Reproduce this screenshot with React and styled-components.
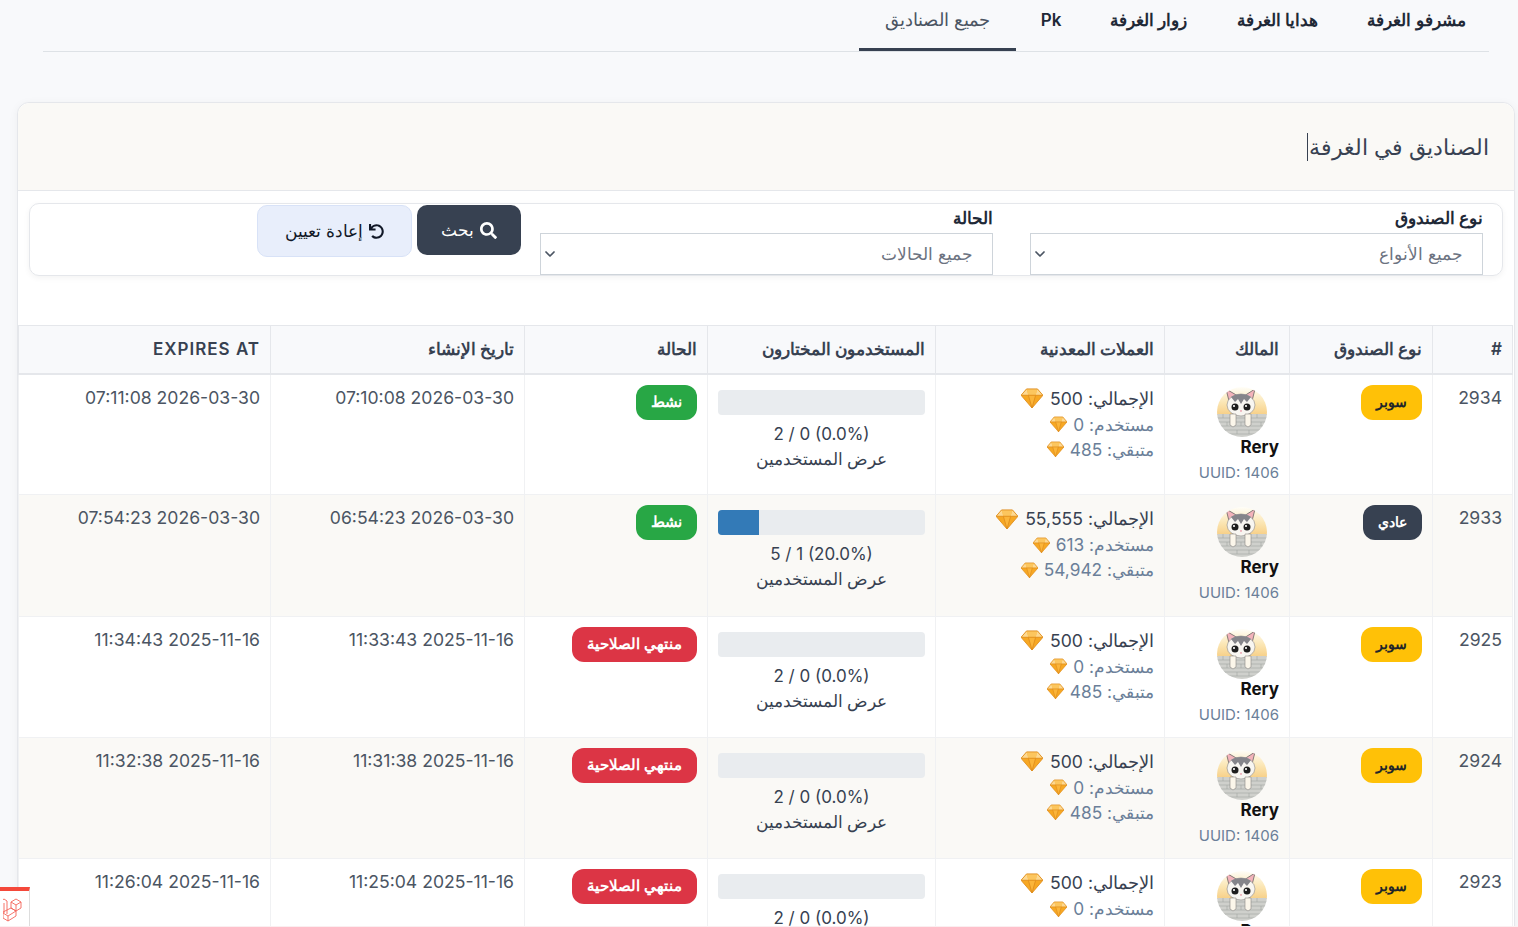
import React from "react";
import styled, { createGlobalStyle } from "styled-components";
import { FaSearch, FaUndo } from "react-icons/fa";
import { ChevronDown } from "lucide-react";

const GlobalStyle = createGlobalStyle`
  html, body {
    margin: 0;
    height: 927px;
    overflow: hidden;
    background: #f8f9fb;
    font-family: Inter, "Noto Sans", sans-serif;
    color: #374151;
  }
  * { box-sizing: border-box; }
`;

const Page = styled.div`
  direction: rtl;
  padding: 0 3px;
`;

const Tabs = styled.nav`
  display: flex;
  margin: 0 26px 50px 40px;
  height: 52px;
  border-bottom: 1px solid #dee2e6;
`;

const Tab = styled.a`
  width: ${(p) => p.$w}px;
  height: 51px;
  padding-top: 10px;
  text-align: center;
  font-size: ${(p) => (p.$active ? "18px" : "17px")};
  line-height: 20px;
  color: ${(p) => (p.$active ? "#4b5563" : "#1f2937")};
  font-weight: ${(p) => (p.$active ? 500 : 600)};
  border-bottom: ${(p) => (p.$active ? "3px solid #374151" : "none")};
`;

const Card = styled.section`
  background: #fff;
  margin-inline: 0 14px;
  border: 1px solid #e5e7eb;
  border-radius: 12px 12px 0 0;
  box-shadow: 0 2px 10px rgba(0, 0, 0, 0.05);
`;

const CardHeader = styled.header`
  height: 88px;
  padding: 0 25px;
  display: flex;
  align-items: center;
  background: #faf9f6;
  border-bottom: 1px solid #e5e7eb;
  border-radius: 12px 12px 0 0;
`;

const Title = styled.h2`
  margin: 0;
  padding-inline-end: 1px;
  font-size: 22px;
  line-height: 28px;
  font-weight: 500;
  color: #374151;
  border-left: 1px solid #374151;
`;

const Filters = styled.form`
  display: flex;
  align-items: flex-start;
  height: 73px;
  margin: 12px 11px 49px 11px;
  padding: 1px 19px 0 0;
  border: 1px solid #e5e7eb;
  border-radius: 10px;
  box-shadow: 0 2px 6px rgba(0, 0, 0, 0.05);
`;

const Fields = styled.div`
  display: flex;
  gap: 37px;
  margin-inline-end: 19px;
`;

const Field = styled.div`
  width: 453px;
`;

const Label = styled.label`
  display: block;
  height: 28px;
  font-size: 17px;
  line-height: 26px;
  font-weight: 600;
  color: #1f2937;
`;

const SelectBox = styled.div`
  position: relative;
  height: 42px;
`;

const Select = styled.select`
  display: block;
  width: 100%;
  height: 100%;
  padding: 0 19px;
  appearance: none;
  font: inherit;
  font-size: 17px;
  color: #6b7280;
  background: #fff;
  border: 1px solid #ced4da;
  border-radius: 0;
`;

const Chevron = styled(ChevronDown)`
  position: absolute;
  left: 2px;
  top: 13px;
  width: 16px;
  height: 16px;
  color: #4b5563;
  stroke-width: 2.6;
  pointer-events: none;
`;

const Button = styled.button`
  display: flex;
  align-items: center;
  justify-content: center;
  gap: 6px;
  flex: none;
  height: ${(p) => (p.$reset ? "52px" : "50px")};
  margin-inline-end: 5px;
  width: ${(p) => (p.$reset ? "155px" : "104px")};
  font: inherit;
  font-size: 17px;
  font-weight: 500;
  color: ${(p) => (p.$reset ? "#111827" : "#fff")};
  background: ${(p) => (p.$reset ? "#e8eefb" : "#374151")};
  border: ${(p) => (p.$reset ? "1px solid #d8e2f7" : "none")};
  border-radius: 10px;
`;

const Table = styled.table`
  width: 1494px;
  margin-inline-start: 1px;
  table-layout: fixed;
  border-collapse: collapse;
  font-size: 17.6px;
`;

const Th = styled.th`
  width: ${(p) => p.$w}px;
  height: 48px;
  padding: 0 10px;
  text-align: right;
  font-size: 17px;
  font-weight: 600;
  letter-spacing: ${(p) => (p.$latin ? "1px" : "0")};
  color: #374151;
  background: #f8f9fb;
  border: 1px solid #e5e7eb;
  border-bottom-width: 2px;
`;

const Row = styled.tr`
  height: 121.25px;
  background: ${(p) => (p.$odd ? "#faf9f6" : "#fff")};
`;

const Td = styled.td`
  padding: 10px 10px 0;
  vertical-align: top;
  text-align: right;
  line-height: 25px;
  color: #4b5563;
  border: 1px solid #f0f1f3;
`;

const Badge = styled.span`
  display: inline-block;
  height: 35px;
  padding: 0 15px;
  font-size: ${(p) => (p.$kind === "super" || p.$kind === "normal" ? "14.2px" : "14.8px")};
  line-height: 34px;
  font-weight: ${(p) => (p.$kind === "super" || p.$kind === "normal" ? 700 : 600)};
  border-radius: 12px;
  color: ${(p) => (p.$kind === "super" ? "#212529" : "#fff")};
  background: ${(p) =>
    ({ super: "#ffc107", normal: "#374151", active: "#28a745", expired: "#dc3545" })[p.$kind]};
`;

const Owner = styled.div`
  display: inline-flex;
  flex-direction: column;
`;

const Avatar = styled.svg`
  width: 50px;
  height: 50px;
  align-self: center;
  margin: 2px 0 0 6px;
`;

const OwnerName = styled.div`
  margin-top: -2px;
  height: 26px;
  font-size: 17px;
  line-height: 24px;
  font-weight: 700;
  color: #111;
`;

const Uuid = styled.div`
  font-size: 15px;
  line-height: 24px;
  color: #6b7f99;
`;

const Coin = styled.div`
  display: flex;
  align-items: center;
  gap: ${(p) => (p.$total ? "7px" : "6px")};
  height: ${(p) => (p.$total ? "27px" : "25px")};
  font-size: ${(p) => (p.$total ? "17.6px" : "17.3px")};
  color: ${(p) => (p.$total ? "#374151" : "#6b7f99")};
`;

const Gem = styled.svg`
  flex: none;
  width: ${(p) => (p.$total ? "22px" : "17px")};
  height: ${(p) => (p.$total ? "20px" : "16px")};
`;

const Track = styled.div`
  height: 25px;
  margin-top: 5px;
  background: #e9ecef;
  border-radius: 4px;
  overflow: hidden;
  direction: ltr;
`;

const Fill = styled.div`
  height: 100%;
  background: #337ab7;
`;

const Usage = styled.div`
  margin-top: 6px;
  text-align: center;
  font-size: 17px;
  line-height: 26px;
  color: #374151;
`;

const UsersLink = styled.div`
  text-align: center;
  font-size: 17px;
  line-height: 25px;
  color: #374151;
`;

const Debugbar = styled.div`
  position: fixed;
  left: 0;
  bottom: 0;
  width: 30px;
  height: 40px;
  background: #fff;
  border-top: 4px solid #f4483a;
  border-right: 1px solid #ddd;
  overflow: hidden;
`;

const BottomLine = styled.div`
  position: fixed;
  left: 0;
  right: 0;
  bottom: 0;
  height: 1px;
  background: #fbeef0;
`;

const tabs = [
  ["مشرفو الغرفة", 145],
  ["هدايا الغرفة", 133],
  ["زوار الغرفة", 125],
  ["Pk", 70],
  ["جميع الصناديق", 157],
];

const columns = [
  ["#", 80],
  ["نوع الصندوق", 143],
  ["المالك", 125],
  ["العملات المعدنية", 229],
  ["المستخدمون المختارون", 228],
  ["الحالة", 183],
  ["تاريخ الإنشاء", 254],
  ["EXPIRES AT", 252],
];

const rows = [
  { id: 2934, kind: "super", total: "500", used: "0", left: "485", count: "2 / 0 (0.0%)", pct: 0, active: true, created: "2026-03-30 07:10:08", expires: "2026-03-30 07:11:08" },
  { id: 2933, kind: "normal", total: "55,555", used: "613", left: "54,942", count: "5 / 1 (20.0%)", pct: 20, active: true, created: "2026-03-30 06:54:23", expires: "2026-03-30 07:54:23" },
  { id: 2925, kind: "super", total: "500", used: "0", left: "485", count: "2 / 0 (0.0%)", pct: 0, active: false, created: "2025-11-16 11:33:43", expires: "2025-11-16 11:34:43" },
  { id: 2924, kind: "super", total: "500", used: "0", left: "485", count: "2 / 0 (0.0%)", pct: 0, active: false, created: "2025-11-16 11:31:38", expires: "2025-11-16 11:32:38" },
  { id: 2923, kind: "super", total: "500", used: "0", left: "485", count: "2 / 0 (0.0%)", pct: 0, active: false, created: "2025-11-16 11:25:04", expires: "2025-11-16 11:26:04" },
];

const GemIcon = ({ total }) => (
  <Gem $total={total} viewBox="0 0 24 22">
    <path d="M6 1h12l6 7-12 14L0 8z" fill="#f7a823" />
    <path d="M6 1h12l-2 7H8z" fill="#fcc65e" />
    <path d="M8 8h8l-4 14z" fill="#fbb53a" />
    <path d="M6 1L0 8h8zM18 1l6 7h-8z" fill="#fdd992" />
    <path d="M6 1h12l6 7-12 14L0 8zM0 8h24M8 8l4 14 4-14" fill="none" stroke="#e08e1e" strokeWidth="1" />
  </Gem>
);

const CatAvatar = () => (
  <Avatar viewBox="0 0 50 50">
    <defs>
      <clipPath id="cat-circle">
        <circle cx="25" cy="25" r="25" />
      </clipPath>
      <linearGradient id="cat-sky" x1="0" y1="0" x2="0" y2="1">
        <stop offset="0" stopColor="#fffef8" />
        <stop offset="0.55" stopColor="#fbe6b4" />
        <stop offset="1" stopColor="#f7cf86" />
      </linearGradient>
    </defs>
    <g clipPath="url(#cat-circle)">
      <rect width="50" height="28" fill="url(#cat-sky)" />
      <rect y="27" width="50" height="23" fill="#cfd0cc" />
      <path d="M0 31h50M0 35h50M0 39h50M0 43h50M0 47h50M6 27v4M40 27v4M10 35v4M24 35v4M44 35v4M8 43v4M20 43v4M32 43v4" stroke="#a3a5a2" strokeWidth=".6" />
      <path d="M9 2l12 7-8 9z" fill="#f3b3bb" stroke="#77706e" strokeWidth=".9" />
      <path d="M38 2l-11 7 7 9z" fill="#f3b3bb" stroke="#77706e" strokeWidth=".9" />
      <ellipse cx="24" cy="18" rx="14" ry="11" fill="#f8f6f1" stroke="#8a8684" strokeWidth=".6" />
      <path d="M14 10c5-4 15-4 20 0l-4 5-3-3-3 5-3-5-3 3z" fill="#85858a" />
      <circle cx="18" cy="20" r="3.500" fill="#1e1e1e" />
      <circle cx="30" cy="20" r="3.500" fill="#1e1e1e" />
      <circle cx="17" cy="19" r="1.100" fill="#fff" />
      <circle cx="29" cy="19" r="1.100" fill="#fff" />
      <path d="M23 23.500h2l-1 1.500z" fill="#e0607a" />
      <path d="M13 27h6v11l-3 2-3-2zM28 27h6v11l-3 2-3-2z" fill="#fbf6ea" stroke="#8a8684" strokeWidth=".6" />
    </g>
  </Avatar>
);

const LaravelMark = () => (
  <svg width="26" height="32" viewBox="0 0 26 32" fill="none" stroke="#f4645a" strokeWidth="0.9">
    <path d="M8 11l5-3 5 3v6l-5 3-5-3zM13 14v6M8 11l5 3 5-3" />
    <path d="M0 21l8-4 5 3v5l-8 5-5-3zM5 25v5M0 22l5 3 8-5" />
    <path d="M-2 10l3-2 3 2v13M1 12v10" />
  </svg>
);

const App = () => (
  <Page>
    <GlobalStyle />
    <Tabs>
      {tabs.map(([t, w], i) => (
        <Tab key={t} $w={w} $active={i === tabs.length - 1}>
          {t}
        </Tab>
      ))}
    </Tabs>
    <Card>
      <CardHeader>
        <Title>الصناديق في الغرفة</Title>
      </CardHeader>
      <Filters>
        <Fields>
          <Field>
            <Label>نوع الصندوق</Label>
            <SelectBox>
              <Select>
                <option>جميع الأنواع</option>
              </Select>
              <Chevron />
            </SelectBox>
          </Field>
          <Field>
            <Label>الحالة</Label>
            <SelectBox>
              <Select>
                <option>جميع الحالات</option>
              </Select>
              <Chevron />
            </SelectBox>
          </Field>
        </Fields>
        <Button type="button">
          <FaSearch size={17} />
          بحث
        </Button>
        <Button type="button" $reset>
          <FaUndo size={15} />
          إعادة تعيين
        </Button>
      </Filters>
      <Table>
        <thead>
          <tr>
            {columns.map(([name, w]) => (
              <Th key={name} $w={w} $latin={name === "EXPIRES AT"}>
                {name}
              </Th>
            ))}
          </tr>
        </thead>
        <tbody>
          {rows.map((r, i) => (
            <Row key={r.id} $odd={i % 2 === 1}>
              <Td>{r.id}</Td>
              <Td>
                <Badge $kind={r.kind}>{r.kind === "super" ? "سوبر" : "عادي"}</Badge>
              </Td>
              <Td>
                <Owner>
                  <CatAvatar />
                  <OwnerName>Rery</OwnerName>
                  <Uuid>UUID: 1406</Uuid>
                </Owner>
              </Td>
              <Td>
                <Coin $total>
                  الإجمالي: {r.total} <GemIcon total />
                </Coin>
                <Coin>
                  مستخدم: {r.used} <GemIcon />
                </Coin>
                <Coin>
                  متبقي: {r.left} <GemIcon />
                </Coin>
              </Td>
              <Td>
                <Track>
                  <Fill style={{ width: `${r.pct}%` }} />
                </Track>
                <Usage dir="ltr">{r.count}</Usage>
                <UsersLink>عرض المستخدمين</UsersLink>
              </Td>
              <Td>
                <Badge $kind={r.active ? "active" : "expired"}>{r.active ? "نشط" : "منتهي الصلاحية"}</Badge>
              </Td>
              <Td>{r.created}</Td>
              <Td>{r.expires}</Td>
            </Row>
          ))}
        </tbody>
      </Table>
    </Card>
    <Debugbar>
      <LaravelMark />
    </Debugbar>
    <BottomLine />
  </Page>
);

export default App;
